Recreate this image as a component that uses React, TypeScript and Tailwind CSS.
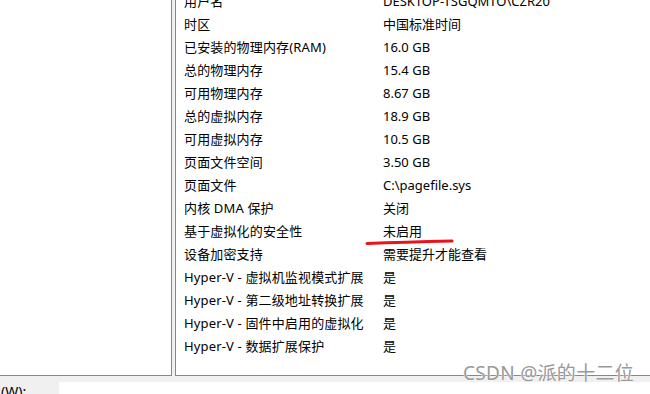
import React from "react";

const rows: [string, string][] = [
  ["用户名", "DESKTOP-TSGQMTO\\CZR20"],
  ["时区", "中国标准时间"],
  ["已安装的物理内存(RAM)", "16.0 GB"],
  ["总的物理内存", "15.4 GB"],
  ["可用物理内存", "8.67 GB"],
  ["总的虚拟内存", "18.9 GB"],
  ["可用虚拟内存", "10.5 GB"],
  ["页面文件空间", "3.50 GB"],
  ["页面文件", "C:\\pagefile.sys"],
  ["内核 DMA 保护", "关闭"],
  ["基于虚拟化的安全性", "未启用"],
  ["设备加密支持", "需要提升才能查看"],
  ["Hyper-V - 虚拟机监视模式扩展", "是"],
  ["Hyper-V - 第二级地址转换扩展", "是"],
  ["Hyper-V - 固件中启用的虚拟化", "是"],
  ["Hyper-V - 数据扩展保护", "是"],
];

export default function App() {
  return (
    <div
      className="relative w-[650px] h-[394px] bg-[#f0f0f0] flex flex-col overflow-hidden text-black"
      style={{ fontFamily: '"Noto Sans", "Noto Sans CJK SC", sans-serif' }}
    >
      <div className="flex h-[376px] shrink-0">
        <div className="w-[172px] bg-white border-r border-b border-[#828790]" />
        <div className="w-[3px]" />
        <div className="flex-1 bg-white border-l border-b border-[#828790] overflow-hidden">
          <div className="-mt-[10px] flex flex-col text-[13px] leading-none">
            {rows.map(([k, v]) => (
              <div key={k} className="h-[23px] flex items-center whitespace-nowrap">
                <div className="w-[207px] pl-[8px] tracking-[0.15px]">{k}</div>
                <div>{v}</div>
              </div>
            ))}
          </div>
        </div>
      </div>
      <div className="flex h-[18px] shrink-0">
        <div className="w-[59px] overflow-hidden whitespace-nowrap text-[14px] leading-none pt-[9px] pl-[1px]">(W):</div>
        <div className="flex-1 flex flex-col">
          <div className="h-[6px]" />
          <div className="flex-1 bg-white" />
        </div>
      </div>
      <svg className="absolute left-[364px] top-[236px]" width="92" height="12" viewBox="0 0 92 12">
        <path d="M3 7.5 Q 40 6 88 5" stroke="#e8141c" strokeWidth="3" strokeLinecap="round" fill="none" />
      </svg>
      <div
        className="absolute left-[463px] top-[364px] text-[19px] leading-none text-[#9a9a9a] whitespace-nowrap tracking-[0.3px]"
        style={{ textShadow: "0 0 1px #fff, 0 0 2px #fff" }}
      >
        CSDN @派的十二位
      </div>
    </div>
  );
}
